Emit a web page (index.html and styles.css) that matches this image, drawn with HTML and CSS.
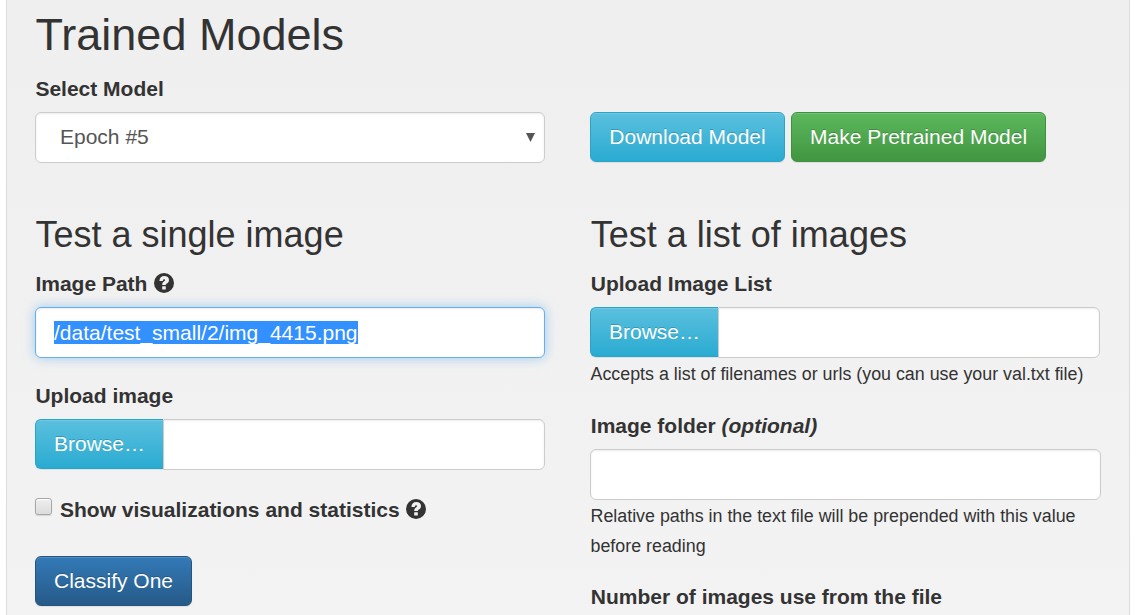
FILE: index.html
```html
<!DOCTYPE html>
<html lang="en">
<head>
<meta charset="utf-8">
<title>Trained Models</title>
<link rel="stylesheet" href="styles.css">
</head>
<body>
<svg class="defs" width="0" height="0">
  <symbol id="question" viewBox="0 0 20 20">
    <circle cx="10" cy="10" r="10" fill="#333"/>
    <path d="M5.400 7.900C5.600 4.800 7.500 3.100 10.300 3.100c2.800 0 4.700 1.600 4.700 3.900 0 2-1 2.900-2.100 3.600-.8.500-1.100.8-1.100 1.500H8.200c0-1.900.6-2.700 1.700-3.500.8-.6 1.200-.9 1.200-1.500 0-.6-.4-.9-1-.9-.7 0-1.200.5-1.300 1.700zM8.200 13.300h3.600v3.300H8.200z" fill="#f1f1f1"/>
  </symbol>
</svg>
<main class="well">
  <h2 class="title">Trained Models</h2>
  <div class="row model-row">
    <div class="col">
      <label class="label">Select Model</label>
      <div class="control select"><span class="select-value">Epoch #5</span><svg class="arrow" viewBox="0 0 9 9"><path d="M0 0h9L4.500 9z" fill="#555"/></svg></div>
    </div>
    <div class="col actions">
      <button class="btn info download">Download Model</button>
      <button class="btn success pretrained">Make Pretrained Model</button>
    </div>
  </div>
  <div class="row">
    <section class="col">
      <h3 class="subtitle">Test a single image</h3>
      <label class="label">Image Path <svg class="help"><use href="#question"/></svg></label>
      <div class="control focused"><span class="selected">/data/test_small/2/img_4415.png</span></div>
      <label class="label spaced">Upload image</label>
      <div class="file"><button class="btn info browse">Browse…</button><div class="control file-name"></div></div>
      <div class="check-row"><span class="checkbox"></span><label class="check-label">Show visualizations and statistics <svg class="help"><use href="#question"/></svg></label></div>
      <button class="btn primary">Classify One</button>
    </section>
    <section class="col list">
      <h3 class="subtitle">Test a list of images</h3>
      <label class="label">Upload Image List</label>
      <div class="file list-file"><button class="btn info browse">Browse…</button><div class="control file-name"></div></div>
      <p class="hint">Accepts a list of filenames or urls (you can use your val.txt file)</p>
      <label class="label">Image folder <em>(optional)</em></label>
      <div class="control"></div>
      <p class="hint">Relative paths in the text file will be prepended with this value before reading</p>
      <label class="label count">Number of images use from the file</label>
    </section>
  </div>
</main>
</body>
</html>
```
FILE: styles.css
```css
* { box-sizing: border-box; }
html, body { height: 615px; overflow: hidden; }
body {
  margin: 0;
  background: #fff;
  color: #333;
  font: 21px/30px "Liberation Sans", Arial, sans-serif;
}
.defs { position: absolute; }
.well {
  width: 1124px;
  height: 640px;
  margin-left: 6px;
  padding: 10px 28px 0;
  border: 1px solid #dcdcdc;
  border-width: 0 1px;
  background: linear-gradient(#efefef, #f3f3f3);
}
.title, .subtitle { margin: 0; padding-left: .5px; font-weight: normal; white-space: nowrap; }
.title { font-size: 45px; line-height: 49px; margin-bottom: 15px; }
.subtitle { font-size: 36px; line-height: 40px; margin-bottom: 14px; }
.row { display: grid; grid-template-columns: 510px 511px; column-gap: 45px; }
.model-row { margin-bottom: 52px; }
.actions { display: flex; align-items: flex-start; gap: 6px; padding-top: 38px; }
.label { display: block; height: 30px; margin-bottom: 8px; padding-left: .4px; font-weight: bold; white-space: nowrap; }
.list .label, .list .subtitle { padding-left: .8px; }
.spaced { margin-top: 23px; }
.control {
  height: 51px;
  padding: 10px 18px;
  border: 1px solid #ccc;
  border-radius: 6px;
  background: #fff;
  box-shadow: inset 0 1px 2px rgba(0, 0, 0, .075);
}
.select { display: flex; justify-content: space-between; padding: 9px 9px 9px 24px; color: #555; }
.arrow { width: 9px; height: 9px; margin-top: 11px; }
.focused { border-color: #66afe9; box-shadow: inset 0 1px 2px rgba(0, 0, 0, .075), 0 0 12px rgba(102, 175, 233, .6); }
.selected { background: #3390ff; color: #fff; }
.btn {
  height: 50px;
  padding: 0 18px;
  border: 1px solid;
  border-radius: 6px;
  color: #fff;
  font: inherit;
  line-height: 48px;
  text-shadow: 0 -1px 0 rgba(0, 0, 0, .2);
  box-shadow: inset 0 1px 0 rgba(255, 255, 255, .15), 0 1px 1px rgba(0, 0, 0, .075);
  white-space: nowrap;
}
.info { border-color: #28a4c9; background: linear-gradient(#5bc0de, #2aabd2); }
.success { border-color: #3e8f3e; background: linear-gradient(#5cb85c, #419641); }
.primary { border-color: #245580; background: linear-gradient(#337ab7, #265a88); width: 157px; }
.download { width: 195px; }
.pretrained { width: 255px; }
.file { display: flex; height: 51px; }
.list-file { width: 510px; }
.browse { width: 128px; border-right: 0; border-radius: 6px 0 0 6px; }
.file-name { flex: 1; border-radius: 0 6px 6px 0; }
.help { display: inline-block; width: 20px; height: 20px; margin-left: .5px; vertical-align: -2px; }
.check-row { display: flex; height: 30px; margin: 25px 0 31px; }
.checkbox {
  width: 17px;
  height: 17px;
  margin: 3px 8px 0 0;
  border: 1px solid #a6a6a6;
  border-radius: 3px;
  background: linear-gradient(#eee, #dcdcdc);
  box-shadow: 0 1px 1px rgba(0, 0, 0, .12), inset 0 1px 1px #fff;
}
.check-label { font-weight: bold; white-space: nowrap; }
.hint { margin: 1px 0 22px; padding-left: .5px; font-size: 17.85px; }
.count { margin-top: -1px; }
```
